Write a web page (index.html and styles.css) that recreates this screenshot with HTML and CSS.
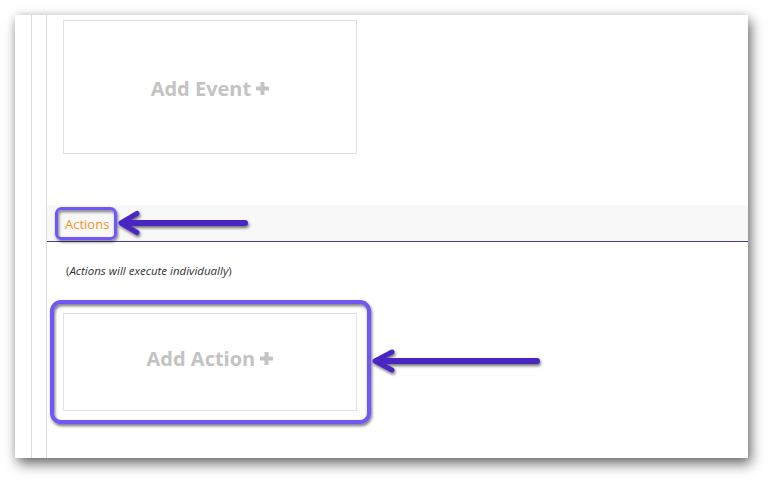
FILE: index.html
```html
<!DOCTYPE html>
<html>
<head>
<meta charset="utf-8">
<link rel="stylesheet" href="styles.css">
</head>
<body>
<div class="window">
  <div class="rail rail-outer"></div>
  <div class="rail rail-inner"></div>
  <div class="main">
    <div class="drop-box event-box"><span class="drop-label">Add Event <svg class="plus" width="13" height="13" viewBox="0 0 13 13"><rect x="4.5" y="0" width="4" height="13" rx="0.6"/><rect x="0" y="4.5" width="13" height="4" rx="0.6"/></svg></span></div>
    <div class="section-header"><span class="section-title">Actions</span></div>
    <p class="note">(<em>Actions will execute individually</em>)</p>
    <div class="drop-box action-box"><span class="drop-label">Add Action <svg class="plus" width="13" height="13" viewBox="0 0 13 13"><rect x="4.5" y="0" width="4" height="13" rx="0.6"/><rect x="0" y="4.5" width="13" height="4" rx="0.6"/></svg></span></div>
  </div>
</div>
<svg class="annotations" width="773" height="483" viewBox="0 0 773 483" xmlns="http://www.w3.org/2000/svg">
  <defs>
    <filter id="sh" x="-20%" y="-50%" width="140%" height="200%">
      <feDropShadow dx="1" dy="2" stdDeviation="1.4" flood-color="#000" flood-opacity="0.55"/>
    </filter>
  </defs>
  <g filter="url(#sh)" fill="none">
    <rect x="56.5" y="208.5" width="59" height="30" rx="5" stroke="#7356f6" stroke-width="3"/>
    <rect x="52" y="302" width="317" height="120" rx="9" stroke="#7356f6" stroke-width="4"/>
    <g stroke="#4a27c2" stroke-linecap="round" stroke-linejoin="round">
      <line x1="123" y1="223" x2="245" y2="223" stroke-width="6"/>
      <polyline points="137,213.5 121,223 137,232.5" stroke-width="5"/>
      <line x1="377" y1="361" x2="537" y2="361" stroke-width="6"/>
      <polyline points="392,352 375,361 392,370" stroke-width="5"/>
    </g>
  </g>
</svg>
</body>
</html>
```
FILE: styles.css
```css
html, body {
  margin: 0;
  padding: 0;
  background: #ffffff;
}
body {
  width: 773px;
  height: 483px;
  position: relative;
  overflow: hidden;
  font-family: "Open Sans", "Liberation Sans", sans-serif;
}
.window {
  position: relative;
  margin: 15px 0 0 15px;
  width: 733px;
  height: 443px;
  background: #ffffff;
  display: flex;
  box-shadow: 3px 6px 12px rgba(0, 0, 0, 0.55), 0 0 8px rgba(0, 0, 0, 0.12);
}
.rail {
  border-right: 1px solid #dcdcdc;
  flex: none;
}
.rail-outer {
  width: 16px;
}
.rail-inner {
  width: 14px;
}
.main {
  flex: 1;
  display: flex;
  flex-direction: column;
}
.drop-box {
  box-sizing: border-box;
  width: 294px;
  margin-left: 16px;
  border: 1px solid #dde1ea;
  display: flex;
  align-items: center;
  justify-content: center;
}
.event-box {
  margin-top: 5px;
  height: 134px;
  padding-top: 3px;
}
.action-box {
  margin-top: 35px;
  height: 98px;
  padding-bottom: 7px;
}
.drop-label {
  font-weight: 700;
  font-size: 20px;
  color: #c3c3c3;
  line-height: 1;
}
.plus {
  fill: #c3c3c3;
  vertical-align: 1px;
}
.section-header {
  margin-top: 51px;
  background: #f8f8f8;
  border-bottom: 1px solid #55398a;
  display: flex;
  align-items: center;
  padding: 2px 0 0 18px;
  box-sizing: content-box;
  height: 34px;
}
.section-title {
  font-size: 13px;
  color: #f7941d;
}
.note {
  margin: 21px 0 0 19px;
  font-size: 11.5px;
  line-height: 15px;
  color: #333333;
}
.note em {
  font-style: italic;
}
.annotations {
  position: absolute;
  left: 0;
  top: 0;
  pointer-events: none;
}
```
